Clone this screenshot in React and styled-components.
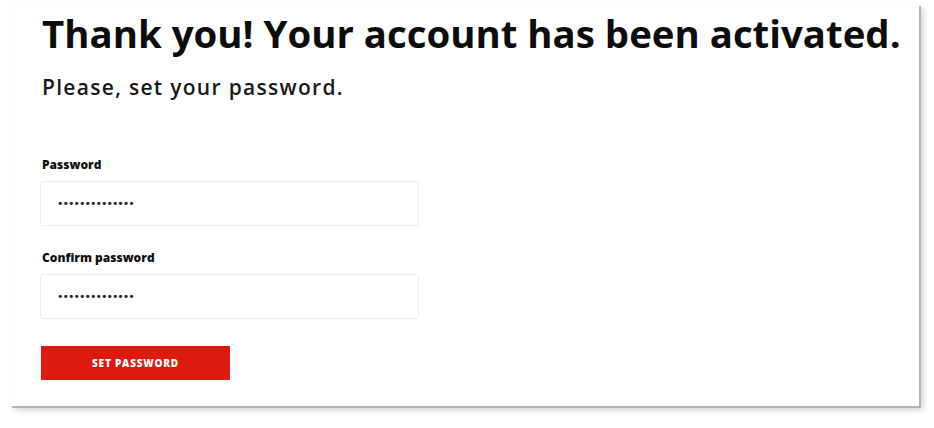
import React from 'react'
import styled, { createGlobalStyle } from 'styled-components'

const GlobalStyle = createGlobalStyle`
  html, body {
    margin: 0;
    padding: 0;
    background: #ffffff;
  }
  body {
    min-height: 100vh;
    font-family: "Open Sans", "Liberation Sans", sans-serif;
    color: #111111;
  }
`

const Page = styled.main`
  padding: 4px 0 20px 10px;
`

const Card = styled.div`
  box-sizing: border-box;
  width: 909px;
  height: 402px;
  padding: 5px 0 0 32px;
  background: #ffffff;
  box-shadow: 2px 2px 0 #b4b4b4, 4px 4px 6px rgba(0, 0, 0, 0.18);
`

const Title = styled.h1`
  margin: 0;
  font-size: 38.4px;
  line-height: 48px;
  font-weight: 700;
  color: #0c0c0c;
`

const Subtitle = styled.p`
  margin: 17px 0 0;
  font-size: 21px;
  line-height: 26px;
  font-weight: 600;
  letter-spacing: 1.3px;
  color: #1a1a1a;
`

const Form = styled.form`
  display: flex;
  flex-direction: column;
  margin-top: 57px;
`

const Field = styled.div`
  display: flex;
  flex-direction: column;
  margin-bottom: ${p => p.$last ? '27px' : '24px'};
`

const Label = styled.label`
  font-size: 12px;
  line-height: 16px;
  font-weight: 800;
  color: #111111;
  margin-bottom: 8px;
`

const Input = styled.input`
  box-sizing: border-box;
  width: 379px;
  height: 45px;
  margin-left: -2px;
  padding: 0 16px;
  border: 1px solid #ededed;
  border-radius: 3px;
  background: #ffffff;
  font-family: "DejaVu Sans", sans-serif;
  font-size: 11px;
  letter-spacing: -1px;
  color: #222222;
  outline: none;
`

const Button = styled.button`
  width: 189px;
  height: 34px;
  margin-left: -1px;
  border: none;
  background: #dc1a10;
  color: #ffffff;
  font-family: "Open Sans", "Liberation Sans", sans-serif;
  font-size: 10px;
  font-weight: 800;
  letter-spacing: 0.8px;
  text-transform: uppercase;
  cursor: pointer;
`

function App () {
  return (
    <Page>
      <GlobalStyle />
      <Card>
        <Title>Thank you! Your account has been activated.</Title>
        <Subtitle>Please, set your password.</Subtitle>
        <Form onSubmit={e => e.preventDefault()}>
          <Field>
            <Label>Password</Label>
            <Input type="password" defaultValue="passwordpasswo" />
          </Field>
          <Field $last>
            <Label>Confirm password</Label>
            <Input type="password" defaultValue="passwordpasswo" />
          </Field>
          <Button type="submit">Set password</Button>
        </Form>
      </Card>
    </Page>
  )
}

export default App
